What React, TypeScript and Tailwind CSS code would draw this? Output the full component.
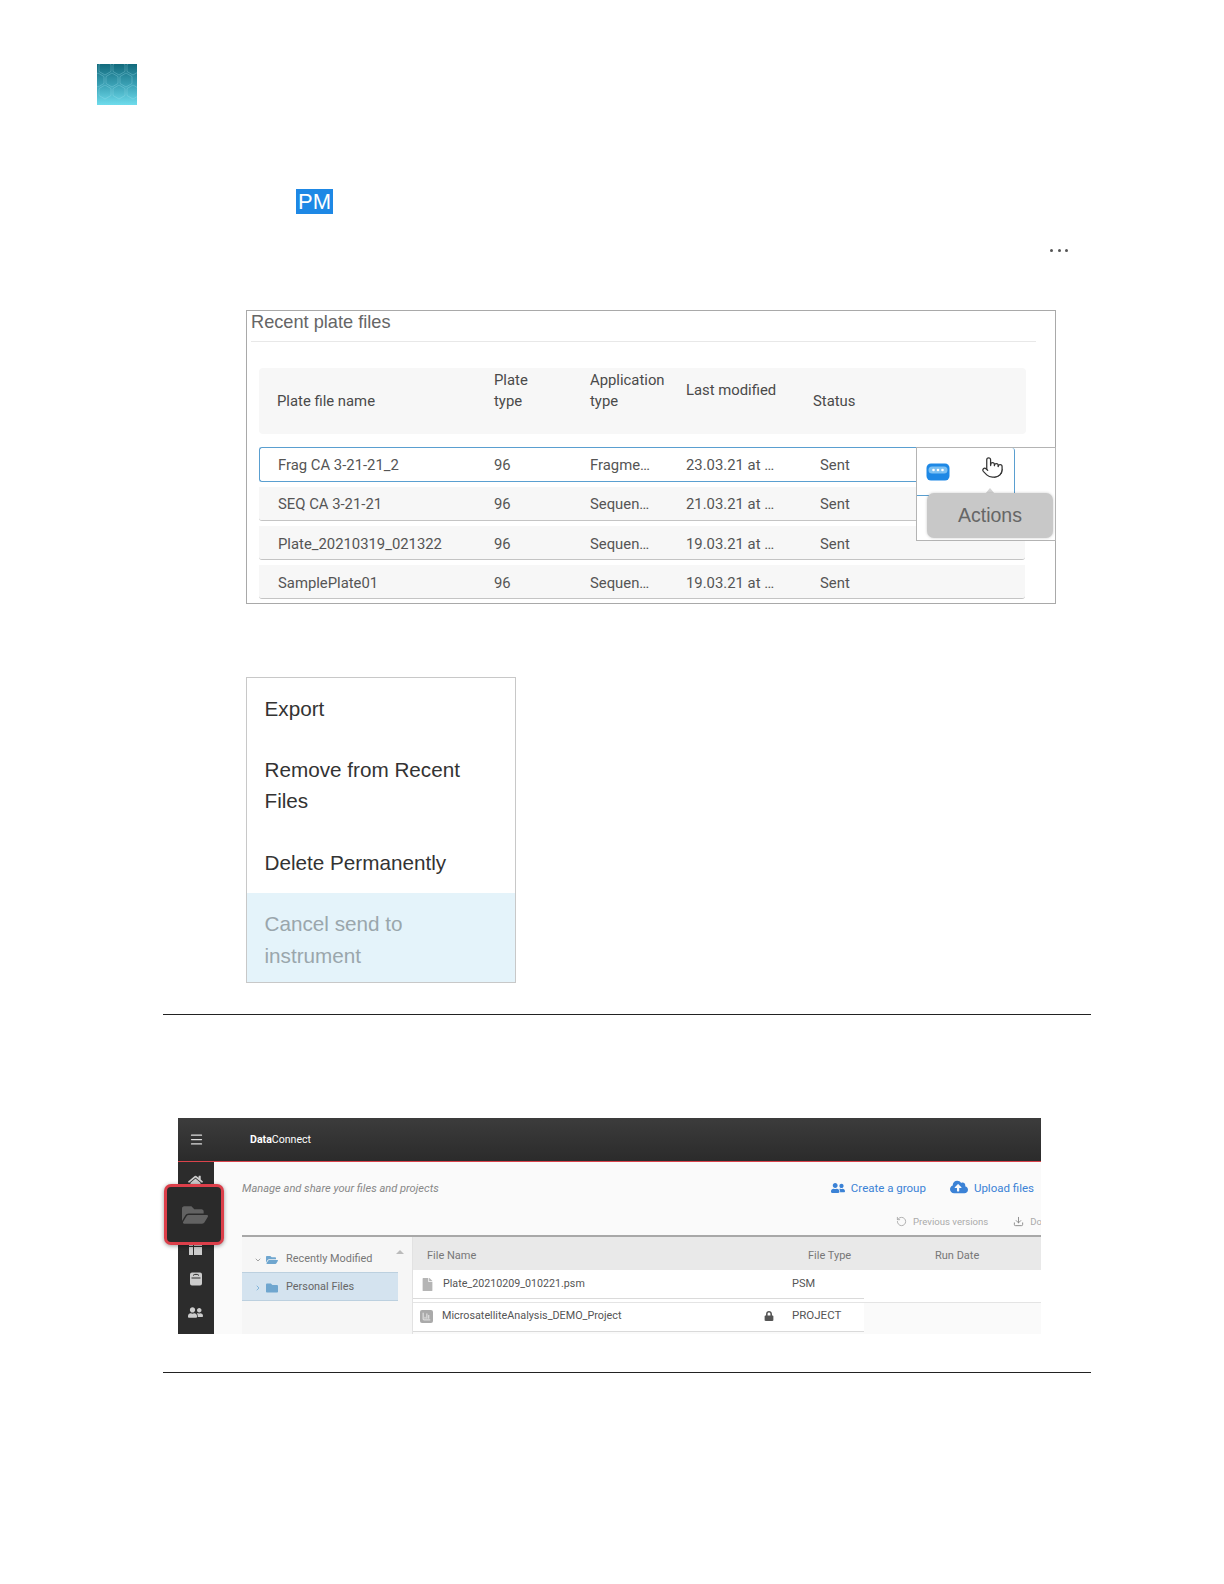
import { FaCloudUploadAlt, FaFile, FaFolder, FaFolderOpen, FaHome, FaLock, FaUserFriends } from "react-icons/fa";
import { Pointer, Download, RotateCcw, Menu, ChevronDown, ChevronRight, ChartColumn } from "lucide-react";

const rows = [
  { name: "Frag CA 3-21-21_2", app: "Fragme…", date: "23.03.21 at …" },
  { name: "SEQ CA 3-21-21", app: "Sequen…", date: "21.03.21 at …" },
  { name: "Plate_20210319_021322", app: "Sequen…", date: "19.03.21 at …" },
  { name: "SamplePlate01", app: "Sequen…", date: "19.03.21 at …" },
];

function Logo() {
  const hexes = [
    [8, 4], [22, 4], [36, 4], [1, 16], [15, 16], [29, 16], [8, 28], [22, 28], [36, 28],
  ];
  return (
    <svg width="40" height="41" viewBox="0 0 40 41" className="block">
      <defs>
        <linearGradient id="logoFill" x1="0" y1="0" x2="0" y2="1">
          <stop offset="0" stopColor="#126a7c" />
          <stop offset="0.5" stopColor="#3aa0b4" />
          <stop offset="1" stopColor="#6fdcec" />
        </linearGradient>
      </defs>
      <rect width="40" height="41" fill="url(#logoFill)" />
      {hexes.map(([x, y]) => (
        <path
          key={`${x}-${y}`}
          d={`M${x} ${y - 7}l6 3.5v7l-6 3.5l-6-3.5v-7z`}
          fill="none"
          stroke="#9fe3ee"
          strokeOpacity="0.45"
          strokeWidth="0.7"
        />
      ))}
    </svg>
  );
}

function PlateTable() {
  return (
    <div className="relative ml-[246px] mt-[84px] h-[294px] w-[810px] border border-[#a9a9a9] bg-white font-['Roboto',sans-serif] text-[14.85px] text-[#555]">
      <div className="ml-[4px] mr-[19px] h-[31px] border-b border-[#e8e8e8] font-['Liberation_Sans',sans-serif] text-[18.2px] leading-[22px] text-[#666]">Recent plate files</div>
      <div className="ml-[12px] mt-[26px] grid h-[66px] w-[767px] grid-cols-[217px_96px_96px_127px_1fr] items-center rounded-sm bg-[#f7f7f7] pl-[18px] leading-[21px] text-[#4a4a4a]">
        <div className="pt-[1px]">Plate file name</div>
        <div className="pb-[20px]">Plate<br />type</div>
        <div className="pb-[20px]">Application<br />type</div>
        <div className="pb-[22px]">Last modified</div>
        <div className="pt-[1px]">Status</div>
      </div>
      <div className="ml-[12px] mt-[13px] flex flex-col gap-[5px]">
        {rows.map((row, i) => (
          <div
            key={row.name}
            className={
              i === 0
                ? "grid h-[35px] w-[700px] grid-cols-[216px_96px_96px_127px_1fr] items-center rounded-l-[3px] border border-r-0 border-[#5a9fd0] bg-white pl-[18px] pt-[1px]"
                : i === 1
                  ? "grid h-[34px] w-[766px] grid-cols-[217px_96px_96px_127px_1fr] items-center rounded-b-[3px] border-b border-[#c4c4c4] bg-[#f7f7f7] pl-[18px] pt-[1px]"
                  : "grid h-[34px] w-[766px] grid-cols-[217px_96px_96px_127px_1fr] items-center rounded-b-[3px] border-b border-[#c4c4c4] bg-[#f7f7f7] pl-[18px] pt-[3px]"
            }
          >
            <div className={i === 0 ? "" : "pl-[1px]"}>{row.name}</div>
            <div>96</div>
            <div>{row.app}</div>
            <div>{row.date}</div>
            <div className="pl-[7px]">Sent</div>
          </div>
        ))}
      </div>

      {/* hover crop over the first row */}
      <div className="absolute left-[669px] top-[136px] h-[94px] w-[140px] border border-[#b4b4b4] bg-white">
        <div className="flex h-[48px] w-[98px] items-center justify-between rounded-tr-[3px] rounded-br-[3px] border-r border-b border-[#5a9fd0] pl-[9px] pr-[10px]">
          <svg width="24" height="18" viewBox="0 0 24 18">
            <rect x="0.5" y="0.5" width="23" height="17" rx="4.5" fill="#1e88e5" />
            <rect x="2.5" y="3.5" width="19" height="7" rx="3.5" fill="#7cc0f2" />
            <circle cx="7.5" cy="7" r="1.3" fill="#fff" />
            <circle cx="12" cy="7" r="1.3" fill="#fff" />
            <circle cx="16.5" cy="7" r="1.3" fill="#fff" />
          </svg>
          <Pointer size={23} strokeWidth={1.3} fill="#fff" className="-mt-[8px] text-[#333]" />
        </div>
        <div className="absolute left-[68px] top-[40px] h-0 w-0 border-x-[5px] border-b-[6px] border-x-transparent border-b-[#d4d4d4]" />
        <div className="absolute left-[10px] top-[45px] flex h-[45px] w-[126px] items-center justify-center rounded-[7px] bg-[#c8c8c8] font-['Liberation_Sans',sans-serif] text-[19.5px] text-[#666] shadow-[0_0_3px_rgba(0,0,0,0.2)]">
          Actions
        </div>
      </div>
    </div>
  );
}

function ActionMenu() {
  return (
    <div className="ml-[246px] mt-[73px] w-[270px] border border-[#c8c8c8] bg-white font-['Liberation_Sans',sans-serif] text-[20.7px] leading-[31px] text-[#333]">
      <div className="px-[17.5px] pt-[15px] pb-[15px]">Export</div>
      <div className="px-[17.5px] pb-[15px] pt-[15px]">Remove from Recent<br />Files</div>
      <div className="px-[17.5px] pb-[15px] pt-[16px]">Delete Permanently</div>
      <div className="bg-[#e4f3fa] px-[17.5px] pb-[10px] pt-[15px] leading-[32px] text-[#9aa6ac]">Cancel send to<br />instrument</div>
    </div>
  );
}

function DataConnect() {
  return (
    <div className="relative ml-[178px] mt-[103px] w-[863px] font-['Roboto',sans-serif]">
      <div className="flex h-[44px] items-center border-b border-[#d9434b] bg-gradient-to-b from-[#3c3c3c] to-[#2b2b2b] pl-[11px] text-[10.6px] text-white">
        <Menu size={15} className="text-[#ddd]" />
        <div className="ml-[46px]"><span className="font-bold">Data</span>Connect</div>
      </div>
      <div className="flex h-[172px]">
        <div className="flex w-[36px] shrink-0 flex-col items-center bg-[#2c2c2c] pr-[1px] text-[#ccc]">
          <FaHome size={15} className="mt-[12px]" />
          <div className="mt-[53px] grid grid-cols-3 gap-[0.5px]">
            {Array.from({ length: 9 }).map((_, i) => (
              <span key={i} className="h-[4px] w-[4px] bg-[#ccc]" />
            ))}
          </div>
          <svg width="12" height="14" viewBox="0 0 12 14" className="mt-[17px]">
            <path d="M2 0.5h8a2 2 0 0 1 2 2v9a2 2 0 0 1-2 2h-8a2 2 0 0 1-2-2v-9a2 2 0 0 1 2-2z" fill="#ccc" />
            <path d="M1.5 6h9" stroke="#2c2c2c" strokeWidth="1" />
            <path d="M3 3.5c1-1.6 5-1.6 6 0" stroke="#2c2c2c" strokeWidth="1" fill="none" />
          </svg>
          <FaUserFriends size={15} className="mt-[19px]" />
        </div>
        <div className="min-w-0 flex-1 bg-[#fafafa]">
          <div className="flex h-[54px] justify-between overflow-hidden pl-[28px] pr-[7px] pt-[18px] text-[11.5px] leading-[16px]">
            <span className="mt-[1px] text-[11.1px] italic text-[#888]">Manage and share your files and projects</span>
            <div className="flex text-[#3b82d6]">
              <FaUserFriends size={14} className="mr-[6px] mt-[1px]" />
              <span>Create a group</span>
              <FaCloudUploadAlt size={18} className="ml-[24px] mr-[6px] -mt-[2px]" />
              <span>Upload files</span>
            </div>
          </div>
          <div className="-mt-[1px] flex h-[20px] items-start overflow-hidden whitespace-nowrap pl-[682px] text-[9.6px] leading-[14px] text-[#aaa]">
            <RotateCcw size={11} className="mr-[6px] mt-[1px] shrink-0" />
            <span>Previous versions</span>
            <Download size={11} className="ml-[25px] mt-[1px] shrink-0 text-[#888]" />
            <span className="ml-[6px]">Download</span>
          </div>
          <div className="ml-[28px] flex h-[99px] border-t-2 border-[#a8a8a8] text-[10.9px] text-[#666]">
            <div className="relative w-[171px] shrink-0 border-r border-[#e2e2e2] bg-[#f6f6f6]">
              <div className="flex h-[35px] w-[156px] items-center pl-[12px] pt-[10px] text-[#777]">
                <ChevronDown size={8} className="mr-[4px]" />
                <FaFolderOpen size={12} className="mr-[8px] text-[#6fa6cf]" />
                Recently Modified
              </div>
              <div className="flex h-[29px] w-[156px] items-center border-y border-[#bcd0df] bg-[#d4e3ef] pt-[2px] pl-[12px] text-[#666]">
                <ChevronRight size={8} className="mr-[4px] text-[#5a9fd0]" />
                <FaFolder size={12} className="mr-[8px] text-[#6fa6cf]" />
                Personal Files
              </div>
              <div className="absolute right-[8px] top-[13px] h-0 w-0 border-x-[4px] border-b-[4px] border-x-transparent border-b-[#bbb]" />
            </div>
            <div className="min-w-0 flex-1">
              <div className="grid h-[33px] grid-cols-[381px_127px_1fr] items-center bg-[#e9e9e9] pl-[14px] pt-[5px] text-[11px] text-[#777]">
                <span>File Name</span>
                <span>File Type</span>
                <span>Run Date</span>
              </div>
              <div className="relative h-[33px] border-b border-[#e4e4e4] bg-white">
                <div className="flex h-[29px] w-[451px] items-center border-b border-[#dadada] pl-[8px] text-[10.7px] text-[#555]">
                  <FaFile size={13} className="mr-[9px] text-[#b5b5b5]" />
                  <span className="w-[349px]">Plate_20210209_010221.psm</span>
                  <span className="text-[11px]">PSM</span>
                </div>
              </div>
              <div className="-mt-[4px] flex h-[33px] w-[451px] items-center border-b border-[#dadada] bg-white pl-[7px] pt-[2px] text-[10.8px] text-[#555]">
                <span className="mr-[9px] flex h-[13px] w-[13px] items-center justify-center rounded-[2px] bg-[#aaa] text-white">
                  <ChartColumn size={9} />
                </span>
                <span className="w-[322px]">MicrosatelliteAnalysis_DEMO_Project</span>
                <FaLock size={10} className="mr-[18px] text-[#555]" />
                <span className="text-[11.5px]">PROJECT</span>
              </div>
            </div>
          </div>
        </div>
      </div>

      {/* red call-out on the files icon */}
      <div className="absolute left-[-14px] top-[66px] flex h-[61px] w-[60px] items-center justify-center rounded-[7px] border-[3px] border-[#dc3f4a] bg-[#2a2a2a] pl-[2px] shadow-[0_1px_4px_rgba(0,0,0,0.4)]">
        <FaFolderOpen size={26} className="text-[#626262]" />
      </div>
    </div>
  );
}

export default function App() {
  return (
    <div className="relative h-[1584px] w-[1224px] overflow-hidden bg-white">
      <div className="ml-[97px] pt-[64px]"><Logo /></div>
      <div className="ml-[296px] mt-[84px] flex h-[25px] w-[37px] items-center justify-center bg-[#1e88e5] font-['Liberation_Sans',sans-serif] text-[22px] text-white">PM</div>
      <div className="ml-[1050px] mt-[35px] flex w-[18px] justify-between">
        <span className="h-[3px] w-[3px] rounded-full bg-[#555]" />
        <span className="h-[3px] w-[3px] rounded-full bg-[#555]" />
        <span className="h-[3px] w-[3px] rounded-full bg-[#555]" />
      </div>
      <div className="-mt-[26px]">
        <PlateTable />
      </div>
      <ActionMenu />
      <hr className="ml-[163px] mt-[31px] w-[928px] border-t border-[#222]" />
      <DataConnect />
      <hr className="ml-[163px] mt-[38px] w-[928px] border-t border-[#222]" />
    </div>
  );
}
